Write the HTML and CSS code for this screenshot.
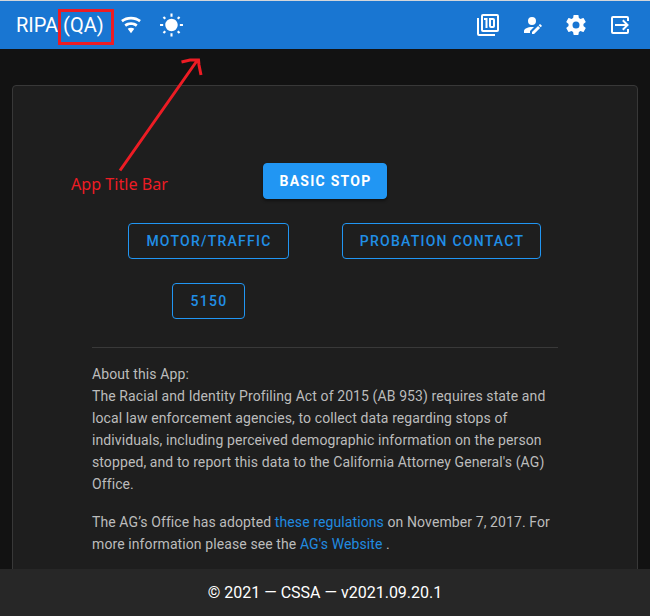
FILE: index.html
```html
<!DOCTYPE html>
<html lang="en">
<head>
<meta charset="utf-8">
<title>RIPA (QA)</title>
<link rel="stylesheet" href="styles.css">
</head>
<body>
<div class="app">
  <header class="bar">
    <h1 class="title">RIPA (QA)</h1>
    <svg class="icon wifi" viewBox="0 0 24 24"><path d="M12,21L15.6,16.2C14.6,15.45 13.35,15 12,15C10.65,15 9.4,15.45 8.4,16.2L12,21M12,3C7.95,3 4.21,4.34 1.2,6.6L3,9C5.5,7.12 8.62,6 12,6C15.38,6 18.5,7.12 21,9L22.8,6.6C19.79,4.34 16.05,3 12,3M12,9C9.3,9 6.81,9.89 4.8,11.4L6.6,13.8C8.1,12.67 9.97,12 12,12C14.03,12 15.9,12.67 17.4,13.8L19.2,11.4C17.19,9.89 14.7,9 12,9Z"/></svg>
    <svg class="icon sun" viewBox="0 0 24 24"><path d="M3.55,18.54L4.96,19.95L6.76,18.16L5.34,16.74M11,22.45H13V19.5H11M12,5.5A6,6 0 0,0 6,11.5A6,6 0 0,0 12,17.5A6,6 0 0,0 18,11.5C18,8.18 15.31,5.5 12,5.5M20,12.5H23V10.5H20M17.24,18.16L19.04,19.95L20.45,18.54L18.66,16.74M20.45,4.46L19.04,3.05L17.24,4.84L18.66,6.26M13,0.55H11V3.5H13M4,10.5H1V12.5H4M6.76,4.84L4.96,3.05L3.55,4.46L5.34,6.26L6.76,4.84Z"/></svg>
    <nav class="actions">
      <svg class="icon line" viewBox="0 0 24 24"><rect x="6" y="2" width="16" height="16" rx="1"/><path d="M2 5V21Q2 22 3 22H19M8 6H10.5V15M14 6H17Q18 6 18 7V13Q18 14 17 14H15Q14 14 14 13Z"/></svg>
      <svg class="icon" viewBox="0 0 24 24"><path d="M21.7,13.35L20.7,14.35L18.65,12.3L19.65,11.3C19.86,11.09 20.21,11.09 20.42,11.3L21.7,12.58C21.91,12.79 21.91,13.14 21.7,13.35M12,18.94L18.06,12.88L20.11,14.93L14.06,21H12V18.94M12,14C7.58,14 4,15.79 4,18V20H10V18.11L14,14.11C13.34,14.03 12.67,14 12,14M12,4A4,4 0 0,0 8,8A4,4 0 0,0 12,12A4,4 0 0,0 16,8A4,4 0 0,0 12,4Z"/></svg>
      <svg class="icon" viewBox="0 0 24 24"><path d="M12,15.5A3.5,3.5 0 0,1 8.5,12A3.5,3.5 0 0,1 12,8.5A3.5,3.5 0 0,1 15.5,12A3.5,3.5 0 0,1 12,15.5M19.43,12.97C19.47,12.65 19.5,12.33 19.5,12C19.5,11.67 19.47,11.34 19.43,11L21.54,9.37C21.73,9.22 21.78,8.95 21.66,8.73L19.66,5.27C19.54,5.05 19.27,4.96 19.05,5.05L16.56,6.05C16.04,5.66 15.5,5.32 14.87,5.07L14.5,2.42C14.46,2.18 14.25,2 14,2H10C9.75,2 9.54,2.18 9.5,2.42L9.13,5.07C8.5,5.32 7.96,5.66 7.44,6.05L4.95,5.05C4.73,4.96 4.46,5.05 4.34,5.27L2.34,8.73C2.21,8.95 2.27,9.22 2.46,9.37L4.57,11C4.53,11.34 4.5,11.67 4.5,12C4.5,12.33 4.53,12.65 4.57,12.97L2.46,14.63C2.27,14.78 2.21,15.05 2.34,15.27L4.34,18.73C4.46,18.95 4.73,19.03 4.95,18.95L7.44,17.94C7.96,18.34 8.5,18.68 9.13,18.93L9.5,21.58C9.54,21.82 9.75,22 10,22H14C14.25,22 14.46,21.82 14.5,21.58L14.87,18.93C15.5,18.67 16.04,18.34 16.56,17.94L19.05,18.95C19.27,19.03 19.54,18.95 19.66,18.73L21.66,15.27C21.78,15.05 21.73,14.78 21.54,14.63L19.43,12.97Z"/></svg>
      <svg class="icon line" viewBox="0 0 24 24"><path d="M20 8V5Q20 4 19 4H5Q4 4 4 5V19Q4 20 5 20H19Q20 20 20 19V16M7 12H19M14.8 7.3L19.5 12L14.8 16.7"/></svg>
    </nav>
  </header>

  <main class="main">
    <section class="card">
      <div class="buttons">
        <button class="btn primary">BASIC STOP</button>
        <button class="btn">MOTOR/TRAFFIC</button>
        <button class="btn">PROBATION CONTACT</button>
        <button class="btn code">5150</button>
      </div>
      <hr class="divider">
      <div class="about">
        <p>About this App:<br>The Racial and Identity Profiling Act of 2015 (AB 953) requires state and local law enforcement agencies, to collect data regarding stops of individuals, including perceived demographic information on the person stopped, and to report this data to the California Attorney General's (AG) Office.</p>
        <p>The AG’s Office has adopted <a>these regulations</a> on November 7, 2017. For more information please see the <a>AG's Website</a> .</p>
      </div>
    </section>
  </main>

  <footer class="footer">© 2021 — CSSA — v2021.09.20.1</footer>

  <!-- Callout pointing at the title bar -->
  <svg class="callout" viewBox="0 0 220 200">
    <rect x="59.5" y="10.5" width="53" height="33"/>
    <path d="M120 170.500L197.500 60M181.500 62L190 60H198.500L199 65L201 75"/>
    <text x="71" y="190" textLength="97" lengthAdjust="spacingAndGlyphs">App Title Bar</text>
  </svg>
</div>
</body>
</html>
```
FILE: styles.css
```css
* { box-sizing: border-box; }

body {
  margin: 0;
  background: #121212;
  color: #fff;
  font-family: Roboto, sans-serif;
}

.app {
  position: relative;
  display: flex;
  flex-direction: column;
  height: 616px;
  overflow: hidden;
}

.bar {
  display: flex;
  align-items: center;
  flex: 0 0 49px;
  padding: 0 18px 0 16px;
  border-top: 1px solid #d3d6da;
  background: #1976d2;
}

.title {
  width: 104px;
  margin: 0;
  font-size: 20px;
  font-weight: 400;
  line-height: 30px;
  white-space: nowrap;
}

.icon {
  flex: none;
  width: 24px;
  height: 24px;
  fill: #fff;
}

.line {
  fill: none;
  stroke: #fff;
  stroke-width: 2;
}

.wifi {
  width: 22px;
  height: 22px;
}

.sun {
  width: 25px;
  height: 25px;
  margin-left: 17px;
}

.actions {
  display: flex;
  gap: 20px;
  margin-left: auto;
}

.main {
  flex: 1;
  min-height: 0;
  padding: 36px 12px 0;
  overflow: hidden;
}

.card {
  height: 520px;
  padding: 77px 79px 0;
  border: 1px solid #383838;
  border-radius: 4px;
  background: #1e1e1e;
}

.buttons {
  display: grid;
  grid-template-columns: 1fr 1fr;
  justify-items: center;
  row-gap: 24px;
}

.btn {
  height: 36px;
  padding: 0 16px 0 17px;
  border: 1px solid #2196f3;
  border-radius: 4px;
  background: none;
  color: #218fe6;
  font: 500 14px Roboto, sans-serif;
  letter-spacing: 1.25px;
}

.code { width: 73px; }

.primary {
  grid-column: 1 / -1;
  width: 124px;
  padding: 0 14px 0 15px;
  background: #2196f3;
  box-shadow: 0 2px 3px rgba(0, 0, 0, .4);
  color: #fff;
  font-weight: 700;
}

.divider {
  height: 1px;
  margin: 28px 0 15px;
  border: 0;
  background: #393939;
}

.about {
  color: #bcbcbc;
  font-size: 14px;
  line-height: 22px;
  letter-spacing: .1px;
}

.about p { margin: 0 0 16px; }

.about a { color: #218be0; }

.footer {
  display: flex;
  align-items: center;
  justify-content: center;
  flex: 0 0 47px;
  background: #272727;
  font-size: 16px;
}

.callout {
  position: absolute;
  top: 0;
  left: 0;
  width: 220px;
  height: 200px;
  fill: none;
  stroke: #ed1c24;
  stroke-width: 3;
  pointer-events: none;
}

.callout text {
  fill: #ed1c24;
  stroke: none;
  font: 16px "Noto Sans", sans-serif;
}
```
